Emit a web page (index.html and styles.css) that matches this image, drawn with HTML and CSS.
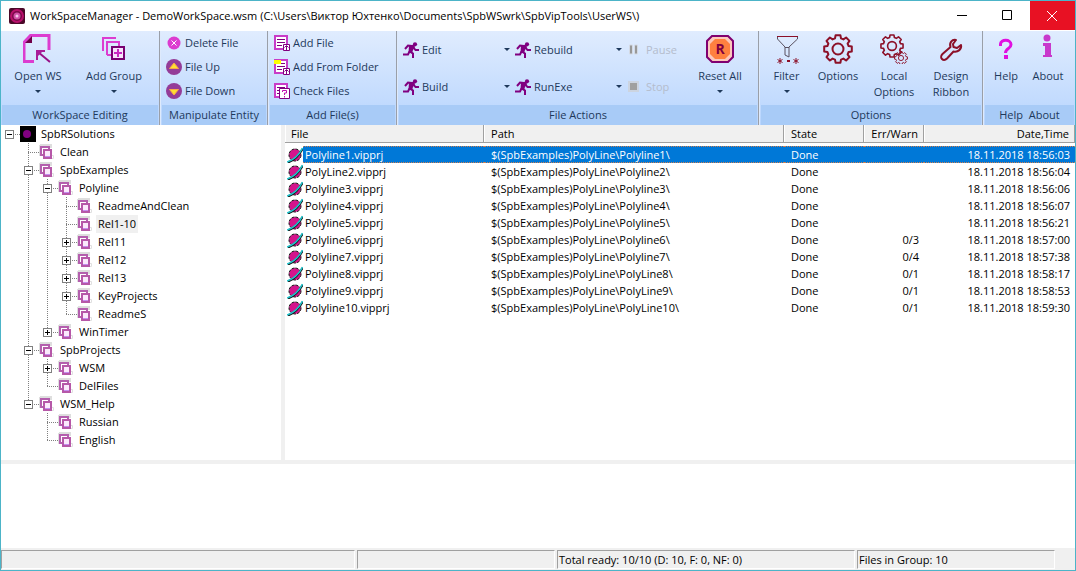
FILE: index.html
```html
<!DOCTYPE html>
<html lang="en">
<head>
<meta charset="utf-8">
<title>WorkSpaceManager</title>
<link rel="stylesheet" href="styles.css">
</head>
<body>
<svg class="defs" aria-hidden="true">
  <symbol id="i-group" viewBox="0 0 16 16">
    <path d="M1 1h11v3M1 1v10h3" fill="none" stroke="#dedede" stroke-width="2"/>
    <path d="M3.500 11.500H14.500V14.500H5" fill="none" stroke="#e0e0e0"/>
    <path d="M4 11H2V3h8v2" fill="none" stroke="#b45fae" stroke-width="2"/>
    <rect x="5" y="6" width="7" height="8" fill="#fbeafc" stroke="#b658a8" stroke-width="2"/>
    <path d="M6 12.500h5" stroke="#c58cf0"/>
  </symbol>
  <symbol id="i-planet" viewBox="0 0 16 16">
    <circle cx="8" cy="8" r="6" fill="#d4148c" stroke="#141414" stroke-dasharray="3 1"/>
    <path d="M1 15.500C6 13.500 12 8.500 15.500 2" fill="none" stroke="#111" stroke-width="2"/>
    <path d="M0 15C6 13 12 8 15.500 1" fill="none" stroke="#20c4cc" stroke-width="1.500"/>
  </symbol>
  <symbol id="i-run" viewBox="0 0 16 16">
    <circle cx="12" cy="2.300" r="2.100" fill="#800080"/>
    <path d="M8.500 7L7 9.500l3 2v4.500M6.500 9.500L5 12.500H0M9 4L5 3.500 2 7M10.500 5.500l2 2.500h3.500" fill="none" stroke="#800080" stroke-width="2"/>
    <path d="M6 3h5l1 2-2 3-1 3.500-3.500-1z" fill="#800080"/>
  </symbol>
  <symbol id="i-doc" viewBox="0 0 16 16">
    <path d="M1 1h12v13H1z" fill="#fff" stroke="#c83cc8" stroke-width="2"/>
    <path d="M3 4.500h8M3 7.500h8M3 10.500h5" stroke="#800080"/>
  </symbol>
  <symbol id="i-gear" viewBox="-15 -15 30 30">
    <path d="M10.600-3 13.800-2.400V2.400L10.600 3 9.600 5.400 11.500 8.100 8.100 11.500 5.400 9.600 3 10.600 2.400 13.800H-2.400L-3 10.600-5.400 9.600-8.100 11.500-11.500 8.100-9.600 5.400-10.600 3-13.800 2.400V-2.400L-10.600-3-9.600-5.400-11.500-8.100-8.100-11.500-5.400-9.600-3-10.600-2.400-13.800H2.400L3-10.600 5.400-9.600 8.100-11.500 11.500-8.100 9.600-5.400z" fill="none" stroke="#8c1028" stroke-width="2" stroke-linejoin="round"/>
    <circle r="5.500" fill="none" stroke="#8c1028" stroke-width="2"/>
  </symbol>
</svg>

<div class="window">
  <header class="titlebar">
    <svg class="ic16" viewBox="0 0 16 16"><rect width="16" height="16" rx="2" fill="#4a0828"/><circle cx="8" cy="8" r="7" fill="#b8106c"/><circle cx="8" cy="8" r="5" fill="#7c0848"/><circle cx="8" cy="8" r="3.500" fill="#d050a8"/><circle cx="8" cy="8" r="1.500" fill="#f4c8e8"/></svg>
    <h1>WorkSpaceManager - DemoWorkSpace.wsm (C:\Users\Виктор Юхтенко\Documents\SpbWSwrk\SpbVipTools\UserWS\)</h1>
    <button class="winbtn" aria-label="Minimize"><svg viewBox="0 0 10 10"><path d="M0 5.500h10" stroke="#000"/></svg></button>
    <button class="winbtn" aria-label="Maximize"><svg viewBox="0 0 10 10"><path d="M.500.500h9v9h-9z" fill="none" stroke="#000"/></svg></button>
    <button class="winbtn close" aria-label="Close"><svg viewBox="0 0 10 10"><path d="M0 0l10 10M10 0L0 10" stroke="#fff"/></svg></button>
  </header>

  <nav class="ribbon">
    <section class="group g-edit">
      <div class="body">
        <button class="big w-open"><svg class="ic30" viewBox="0 0 30 30"><path d="M11 27.500H1V8.500L7.500 1.500H26V16" fill="none" stroke="#dc3cd0" stroke-width="3"/><path d="M2 9h7V2z" fill="#700048"/><path d="M27 28L15 18" stroke="#981088" stroke-width="2"/><path d="M14 26V17h8" fill="none" stroke="#a81c98" stroke-width="2"/><path d="M14 17h6l-6 6z" fill="#a81c98"/></svg><span>Open WS</span><i class="arrow"></i></button>
        <button class="big w-add"><svg class="ic30" viewBox="0 0 30 30"><path d="M4 17V4h13M8 21V8h12v4M8 21h5" fill="none" stroke="#dc3cd0" stroke-width="2"/><rect x="13" y="13" width="12" height="12" fill="#f6e2fa" stroke="#780070" stroke-width="2"/><path d="M19 15v8M15 19h8" stroke="#c828c0" stroke-width="2"/></svg><span>Add Group</span><i class="arrow"></i></button>
      </div>
      <h2>WorkSpace Editing</h2>
    </section>

    <section class="group g-entity">
      <div class="body list">
        <button class="small"><svg class="ic16" viewBox="0 0 16 16"><circle cx="8" cy="8" r="6.500" fill="#dc3cd0"/><path d="M5.500 5.500l5 5M10.500 5.500l-5 5" stroke="#fff"/></svg>Delete File</button>
        <button class="small"><svg class="ic16" viewBox="0 0 16 16"><circle cx="8" cy="8" r="8" fill="#943c98"/><path d="M8 4l4.500 5.500h-9z" fill="#ffe030" stroke="#f8a848"/></svg>File Up</button>
        <button class="small"><svg class="ic16" viewBox="0 0 16 16"><circle cx="8" cy="8" r="8" fill="#943c98"/><path d="M8 12l4.500-5.500h-9z" fill="#ffe030" stroke="#f8a848"/></svg>File Down</button>
      </div>
      <h2>Manipulate Entity</h2>
    </section>

    <section class="group g-files">
      <div class="body list">
        <button class="small"><svg class="ic16" viewBox="0 0 16 16"><use href="#i-doc"/><path d="M9.500 9.500h6v6h-6z" fill="#fff" stroke="#800080"/><path d="M12.500 15v-4M10.500 12.500l2-2 2 2" fill="none" stroke="#800080"/></svg>Add File</button>
        <button class="small"><svg class="ic16" viewBox="0 0 16 16"><use href="#i-doc"/><path d="M0 1h7v4H0z" fill="#ff0"/><path d="M9.500 9.500h6v6h-6z" fill="#fff" stroke="#800080"/><path d="M12.500 15v-4M10.500 12.500l2-2 2 2" fill="none" stroke="#800080"/></svg>Add From Folder</button>
        <button class="small"><svg class="ic16" viewBox="0 0 16 16"><use href="#i-doc"/><path d="M5.500 5.500h10v10h-10z" fill="#fff" stroke="#800080"/><path d="M8.500 9V7.500h4v2.500h-2v2M10.500 13v1.500" fill="none" stroke="#c010b0"/></svg>Check Files</button>
      </div>
      <h2>Add File(s)</h2>
    </section>

    <section class="group g-actions">
      <div class="body">
        <div class="actions">
          <button class="small"><svg class="ic16"><use href="#i-run"/></svg>Edit<i class="arrow"></i></button>
          <button class="small"><svg class="ic16"><use href="#i-run"/></svg>Rebuild<i class="arrow"></i></button>
          <button class="small" disabled><svg class="ic16" viewBox="0 0 16 16"><path d="M2.500 3h3v9h-3zM7.500 3h3v9h-3z" fill="#989898" stroke="#d4dae4"/></svg>Pause</button>
          <button class="small"><svg class="ic16"><use href="#i-run"/></svg>Build<i class="arrow"></i></button>
          <button class="small"><svg class="ic16"><use href="#i-run"/></svg>RunExe<i class="arrow"></i></button>
          <button class="small" disabled><svg class="ic16" viewBox="0 0 16 16"><path d="M2 3h9v9H2z" fill="#a0a0a0" stroke="#ccd4e0" stroke-width="2"/></svg>Stop</button>
        </div>
        <button class="big w-reset"><svg class="ic30" viewBox="0 0 30 30"><path d="M7 2h16l5 5v16l-5 5H7l-5-5V7z" fill="#fcc8bc" stroke="#800070" stroke-width="2"/><path d="M10 5h10l5 5v10l-5 5H10l-5-5V10z" fill="#ff8040"/><text class="r-mark" x="15" y="20" text-anchor="middle">R</text></svg><span>Reset All</span><i class="arrow"></i></button>
      </div>
      <h2>File Actions</h2>
    </section>

    <section class="group g-options">
      <div class="body">
        <button class="big w-filter"><svg class="ic30" viewBox="0 0 30 30"><path d="M5 2.500h21" stroke="#8c1028"/><path d="M5.500 3v2L13 13v8l4 2V13L25.500 5V3M13 13.500h4" fill="none" stroke="#585060"/><path d="M8 24v6M5.500 25.500l5 3M10.500 25.500l-5 3M24 24v6M21.500 25.500l5 3M26.500 25.500l-5 3" stroke="#8c1028"/><path d="M15 26h3v2h-3z" fill="#8c1028"/></svg><span>Filter</span><i class="arrow"></i></button>
        <button class="big w-opt"><svg class="ic30"><use href="#i-gear"/></svg><span>Options</span></button>
        <button class="big w-local"><svg class="ic30" viewBox="0 0 30 30"><use href="#i-gear" x="1" y="0" width="24" height="24"/><use href="#i-gear" x="15" y="17" width="14" height="14"/></svg><span>Local<br>Options</span></button>
        <button class="big w-design"><svg class="ic30" viewBox="0 0 30 30"><path d="M20 6C16 5 13 9 14.500 13L6.500 20C4.500 22 5 24 6 25c1 1 3 1.500 5-.5L17.500 17.500C22 18.500 26 15 25 11l-4 3-3.500-1-.5-3z" fill="none" stroke="#8c1028" stroke-width="2" stroke-linejoin="round"/></svg><span>Design<br>Ribbon</span></button>
      </div>
      <h2>Options</h2>
    </section>

    <section class="group g-help">
      <div class="body">
        <button class="big w-help"><svg class="ic30" viewBox="0 0 30 30"><path d="M9.500 12V10C9.500 5 20 5 20 10.500C20 15 14.500 14 14.500 19" fill="none" stroke="#e010e0" stroke-width="3"/><path d="M13 21h4v4h-4z" fill="#e010e0"/></svg><span>Help</span></button>
        <button class="big w-about"><svg class="ic30" viewBox="0 0 30 30"><circle cx="14" cy="4" r="3.500" fill="#c838cc"/><path d="M10 9h8v12h1v2h-9v-2h2v-9h-2z" fill="#c838cc"/></svg><span>About</span></button>
      </div>
      <h2>Help&nbsp; About</h2>
    </section>
  </nav>

  <main class="panes">
    <ul class="tree">
      <li><b class="c"><button class="tg" aria-label="Collapse"></button></b><svg class="ic16" viewBox="0 0 16 16"><path d="M0 0h16v16H0z"/><circle cx="7" cy="8" r="4" fill="#800080"/></svg><span>SpbRSolutions</span></li>
      <li><b></b><b class="v t"></b><svg class="ic16"><use href="#i-group"/></svg><span>Clean</span></li>
      <li><b></b><b class="v t"><button class="tg" aria-label="Collapse"></button></b><svg class="ic16"><use href="#i-group"/></svg><span>SpbExamples</span></li>
      <li><b></b><b class="v"></b><b class="v t"><button class="tg" aria-label="Collapse"></button></b><svg class="ic16"><use href="#i-group"/></svg><span>Polyline</span></li>
      <li><b></b><b class="v"></b><b class="v"></b><b class="v t"></b><svg class="ic16"><use href="#i-group"/></svg><span>ReadmeAndClean</span></li>
      <li><b></b><b class="v"></b><b class="v"></b><b class="v t"></b><svg class="ic16"><use href="#i-group"/></svg><span class="current">Rel1-10</span></li>
      <li><b></b><b class="v"></b><b class="v"></b><b class="v t"><button class="tg plus" aria-label="Expand"></button></b><svg class="ic16"><use href="#i-group"/></svg><span>Rel11</span></li>
      <li><b></b><b class="v"></b><b class="v"></b><b class="v t"><button class="tg plus" aria-label="Expand"></button></b><svg class="ic16"><use href="#i-group"/></svg><span>Rel12</span></li>
      <li><b></b><b class="v"></b><b class="v"></b><b class="v t"><button class="tg plus" aria-label="Expand"></button></b><svg class="ic16"><use href="#i-group"/></svg><span>Rel13</span></li>
      <li><b></b><b class="v"></b><b class="v"></b><b class="v t"><button class="tg plus" aria-label="Expand"></button></b><svg class="ic16"><use href="#i-group"/></svg><span>KeyProjects</span></li>
      <li><b></b><b class="v"></b><b class="v"></b><b class="e t"></b><svg class="ic16"><use href="#i-group"/></svg><span>ReadmeS</span></li>
      <li><b></b><b class="v"></b><b class="e t"><button class="tg plus" aria-label="Expand"></button></b><svg class="ic16"><use href="#i-group"/></svg><span>WinTimer</span></li>
      <li><b></b><b class="v t"><button class="tg" aria-label="Collapse"></button></b><svg class="ic16"><use href="#i-group"/></svg><span>SpbProjects</span></li>
      <li><b></b><b class="v"></b><b class="v t"><button class="tg plus" aria-label="Expand"></button></b><svg class="ic16"><use href="#i-group"/></svg><span>WSM</span></li>
      <li><b></b><b class="v"></b><b class="e t"></b><svg class="ic16"><use href="#i-group"/></svg><span>DelFiles</span></li>
      <li><b></b><b class="e t"><button class="tg" aria-label="Collapse"></button></b><svg class="ic16"><use href="#i-group"/></svg><span>WSM_Help</span></li>
      <li><b></b><b></b><b class="v t"></b><svg class="ic16"><use href="#i-group"/></svg><span>Russian</span></li>
      <li><b></b><b></b><b class="e t"></b><svg class="ic16"><use href="#i-group"/></svg><span>English</span></li>
    </ul>

    <div class="files">
      <table>
        <colgroup><col class="k-icon"><col class="k-file"><col class="k-path"><col class="k-state"><col class="k-err"><col></colgroup>
        <thead><tr><th colspan="2">File</th><th>Path</th><th>State</th><th class="num">Err/Warn</th><th class="num">Date,Time</th></tr></thead>
        <tbody>
          <tr class="sel"><td><svg class="ic16"><use href="#i-planet"/></svg></td><td>Polyline1.vipprj</td><td>$(SpbExamples)PolyLine\Polyline1\</td><td>Done</td><td></td><td>18.11.2018 18:56:03</td></tr>
          <tr><td><svg class="ic16"><use href="#i-planet"/></svg></td><td>PolyLine2.vipprj</td><td>$(SpbExamples)PolyLine\Polyline2\</td><td>Done</td><td></td><td>18.11.2018 18:56:04</td></tr>
          <tr><td><svg class="ic16"><use href="#i-planet"/></svg></td><td>Polyline3.vipprj</td><td>$(SpbExamples)PolyLine\Polyline3\</td><td>Done</td><td></td><td>18.11.2018 18:56:06</td></tr>
          <tr><td><svg class="ic16"><use href="#i-planet"/></svg></td><td>Polyline4.vipprj</td><td>$(SpbExamples)PolyLine\Polyline4\</td><td>Done</td><td></td><td>18.11.2018 18:56:07</td></tr>
          <tr><td><svg class="ic16"><use href="#i-planet"/></svg></td><td>Polyline5.vipprj</td><td>$(SpbExamples)PolyLine\Polyline5\</td><td>Done</td><td></td><td>18.11.2018 18:56:21</td></tr>
          <tr><td><svg class="ic16"><use href="#i-planet"/></svg></td><td>Polyline6.vipprj</td><td>$(SpbExamples)PolyLine\Polyline6\</td><td>Done</td><td>0/3</td><td>18.11.2018 18:57:00</td></tr>
          <tr><td><svg class="ic16"><use href="#i-planet"/></svg></td><td>Polyline7.vipprj</td><td>$(SpbExamples)PolyLine\Polyline7\</td><td>Done</td><td>0/4</td><td>18.11.2018 18:57:38</td></tr>
          <tr><td><svg class="ic16"><use href="#i-planet"/></svg></td><td>Polyline8.vipprj</td><td>$(SpbExamples)PolyLine\PolyLine8\</td><td>Done</td><td>0/1</td><td>18.11.2018 18:58:17</td></tr>
          <tr><td><svg class="ic16"><use href="#i-planet"/></svg></td><td>Polyline9.vipprj</td><td>$(SpbExamples)PolyLine\PolyLine9\</td><td>Done</td><td>0/1</td><td>18.11.2018 18:58:53</td></tr>
          <tr><td><svg class="ic16"><use href="#i-planet"/></svg></td><td>Polyline10.vipprj</td><td>$(SpbExamples)PolyLine\PolyLine10\</td><td>Done</td><td>0/1</td><td>18.11.2018 18:59:30</td></tr>
        </tbody>
      </table>
    </div>
  </main>

  <section class="output" aria-label="Messages"></section>

  <footer class="status">
    <div class="s-a"></div><div class="s-b"></div><div class="s-c">Total ready: 10/10 (D: 10, F: 0, NF: 0)</div><div class="s-d">Files in Group: 10</div>
  </footer>
</div>
</body>
</html>
```
FILE: styles.css
```css
* { box-sizing: border-box; }

body {
  margin: 0;
  font: 11px/16px "Open Sans", "Noto Sans", sans-serif;
  color: #000;
}

button {
  margin: 0;
  padding: 0;
  border: 0;
  background: none;
  font: inherit;
  color: inherit;
}

.defs { display: none; }
.ic16 { width: 16px; height: 16px; flex: none; display: block; }
.ic30 { width: 30px; height: 30px; flex: none; display: block; }

.window {
  display: flex;
  flex-direction: column;
  height: 100vh;
  border: 1px solid #4cb4c8;
  background: #f0f0f0;
}

/* Title bar */
.titlebar {
  display: flex;
  align-items: center;
  height: 30px;
  flex: none;
  padding-left: 8px;
  background: #fff;
}
.titlebar h1 {
  flex: 1;
  margin: 0 0 0 5px;
  font-size: 11px;
  font-weight: 400;
  white-space: nowrap;
}
.winbtn {
  display: flex;
  align-items: center;
  justify-content: center;
  width: 45px;
  height: 28px;
  padding-right: 2px;
  align-self: flex-start;
}
.winbtn svg { width: 10px; height: 10px; }
.winbtn.close { height: 29px; background: #e81123; }

/* Ribbon */
.ribbon {
  display: flex;
  flex: none;
  color: #1e395b;
  background: #deeafc;
}
.group {
  display: flex;
  flex-direction: column;
  border-right: 1px solid #9a9fa8;
  margin-right: 1px;
  background: linear-gradient(#e0ecfe, #b8d5fe);
}
.group h2 {
  margin: 0 1px;
  font-size: 11px;
  font-weight: 400;
  line-height: 20px;
  text-align: center;
  white-space: nowrap;
  background: #a8cbf7;
}
.body { display: flex; height: 74px; }
.g-edit { width: 159px; }
.g-entity { width: 107px; }
.g-files { width: 128px; }
.g-actions { flex: 1; }
.g-options { width: 223px; }
.g-help { width: 91px; border-right: 0; margin-right: 0; }

.list { flex-direction: column; padding-left: 5px; }
.list .small { height: 24px; }
.list .small, .actions .small {
  display: flex;
  align-items: center;
  gap: 3px;
  text-align: left;
}
.big {
  display: flex;
  flex-direction: column;
  align-items: center;
  padding-top: 3px;
}
.big span { margin-top: 4px; }
.arrow {
  border: 3px solid transparent;
  border-top-color: #1e395b;
  border-bottom: 0;
}
.big .arrow { margin-top: 6px; }
.w-open { width: 74px; }
.w-add { width: 78px; }
.w-reset { width: 72px; }
.w-filter { width: 53px; }
.w-opt { width: 50px; }
.w-local { width: 62px; }
.w-design { width: 52px; }
.w-help { width: 44px; }
.w-about { width: 40px; }

.actions {
  flex: 1;
  display: grid;
  grid-template-columns: 112px 112px 1fr;
  grid-template-rows: 1fr 1fr;
}
.g-actions .body { padding-right: 2px; }
.actions .small { padding: 0 0 0 5px; }
.actions .arrow { margin-left: auto; }
.small:disabled { color: #b4bccc; }
.r-mark { font: 700 14px "Open Sans", sans-serif; fill: #800040; }

/* Tree */
.panes { display: flex; flex: 1; min-height: 0; }
.tree {
  width: 280px;
  flex: none;
  margin: 0 4px 0 0;
  padding: 0;
  list-style: none;
  background: #fff;
}
.tree li { display: flex; align-items: center; height: 18px; }
.tree li > span {
  margin-left: 3px;
  padding: 0 2px;
  line-height: 18px;
}
.tree .current { background: #f0f0f0; }
.tree b {
  --v: repeating-linear-gradient(to bottom, #808080 0 1px, transparent 1px 2px);
  --h: repeating-linear-gradient(to right, #808080 0 1px, transparent 1px 2px);
  display: flex;
  align-items: center;
  width: 19px;
  height: 18px;
  padding: 1px 0 0 4px;
  background-repeat: no-repeat;
}
.tree .v { background-image: var(--v); background-size: 1px 18px; background-position: 8px 0; }
.tree .c { background-image: var(--h); background-size: 11px 1px; background-position: 8px 9px; }
.tree .v.t, .tree .e.t {
  background-image: var(--v), var(--h);
  background-position: 8px 0, 8px 9px;
}
.tree .v.t { background-size: 1px 18px, 11px 1px; }
.tree .e.t { background-size: 1px 10px, 11px 1px; }
.tg {
  width: 9px;
  height: 9px;
  border: 1px solid #808080;
  background: linear-gradient(#000, #000) center / 5px 1px no-repeat #fff;
}
.tg.plus {
  background:
    linear-gradient(#000, #000) center / 5px 1px no-repeat,
    linear-gradient(#000, #000) center / 1px 5px no-repeat #fff;
}

/* File list */
.files { flex: 1; min-width: 0; background: #fff; }
table {
  width: 100%;
  table-layout: fixed;
  border-collapse: separate;
  border-spacing: 0;
}
.k-icon { width: 18px; }
.k-file { width: 181px; }
.k-path { width: 300px; }
.k-state { width: 80px; }
.k-err { width: 60px; }
th {
  height: 18px;
  padding: 0 5px 0 7px;
  border-right: 1px solid #a0a0a0;
  border-bottom: 1px solid #a0a0a0;
  box-shadow: inset 1px 0 #fff;
  background: #f0f0f0;
  font-weight: 400;
  line-height: 17px;
  text-align: left;
}
th:first-child { padding-left: 6px; }
.num { text-align: right; }
tbody::before { content: ""; display: block; height: 3px; }
td {
  height: 17px;
  padding: 0 5px 0 7px;
  line-height: 15px;
  border: solid transparent;
  border-width: 1px 0;
  white-space: nowrap;
}
td:first-child { padding: 0 0 0 2px; border: 0; }
td:nth-child(2) { padding-left: 2px; }
td:nth-child(n+5) { text-align: right; }
.sel td:not(:first-child) {
  border: dotted #d08050;
  border-width: 1px 0;
  background: #0078d7;
  color: #fff;
}

/* Lower pane and status bar */
.output { height: 84px; flex: none; margin-top: 4px; background: #fff; }
.status {
  display: flex;
  gap: 2px;
  height: 22px;
  flex: none;
  padding: 2px 20px 1px 0;
}
.status div {
  border: 1px solid;
  border-color: #a0a0a0 #fff #fff #a0a0a0;
  padding-left: 1px;
  line-height: 18px;
  white-space: nowrap;
}
.s-a { flex: 1; }
.s-b { width: 198px; }
.s-c { width: 298px; }
.s-d { width: 198px; }
```
